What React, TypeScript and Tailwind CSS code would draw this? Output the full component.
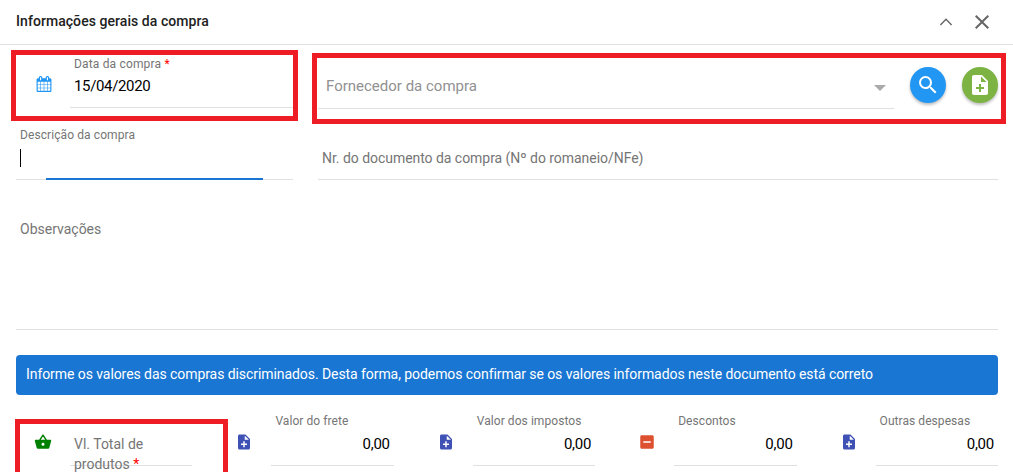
import type { ReactNode } from "react";
import {
  MdClose,
  MdIndeterminateCheckBox,
  MdNoteAdd,
  MdSearch,
  MdShoppingBasket,
} from "react-icons/md";

function CalendarIcon() {
  return (
    <svg viewBox="0 0 1792 1792" className="size-4 fill-[#2196f3]">
      <path d="M192 1664h288v-288h-288v288zM544 1664h320v-288h-320v288zM192 1312h288v-320h-288v320zM544 1312h320v-320h-320v320zM192 928h288v-288h-288v288zM928 1664h320v-288h-320v288zM544 928h320v-288h-320v288zM1312 1664h288v-288h-288v288zM928 1312h320v-320h-320v320zM576 448v-288q0-13-9.5-22.5t-22.5-9.5h-64q-13 0-22.5 9.5t-9.5 22.5v288q0 13 9.5 22.5t22.5 9.5h64q13 0 22.5-9.5t9.5-22.5zM1312 1312h288v-320h-288v320zM928 928h320v-288h-320v288zM1312 928h288v-288h-288v288zM1344 448v-288q0-13-9.5-22.5t-22.5-9.5h-64q-13 0-22.5 9.5t-9.5 22.5v288q0 13 9.5 22.5t22.5 9.5h64q13 0 22.5-9.5t9.5-22.5zM1728 384v1280q0 52-38 90t-90 38h-1408q-52 0-90-38t-38-90v-1280q0-52 38-90t90-38h128v-96q0-66 47-113t113-47h64q66 0 113 47t47 113v96h384v-96q0-66 47-113t113-47h64q66 0 113 47t47 113v96h128q52 0 90 38t38 90z" />
    </svg>
  );
}

function AmountField({ icon, label, value }: { icon: ReactNode; label: string; value: string }) {
  return (
    <div className="flex">
      <div className="w-[54px] shrink-0 pt-[38px] pl-[18px]">{icon}</div>
      <div className="flex h-[71px] min-w-0 flex-1 flex-col border-b border-[#e0e0e0] px-1 pt-[18px]">
        <span className="text-[12px] leading-4 tracking-[0.06px] whitespace-nowrap text-[#757575]">{label}</span>
        <span className="pt-[5px] text-right text-[15px] leading-5 tracking-[-0.25px] text-black">{value}</span>
      </div>
    </div>
  );
}

export default function App() {
  return (
    <div className="relative h-[472px] w-[1013px] overflow-hidden bg-white font-[Roboto,sans-serif] text-[14px] text-[#757575]">
      <header className="flex h-[45px] items-start justify-between border-b border-[#e0e0e0] pt-[10px] pr-[19px] pl-4">
        <h1 className="text-[14px] leading-[22px] font-medium tracking-[0.06px] text-[#212121]">
          Informações gerais da compra
        </h1>
        <div className="flex gap-3">
          <svg viewBox="0 0 24 24" className="size-6 fill-none stroke-[#666]" strokeWidth="1.4">
            <path d="M6.4 15 12 9.2 17.6 15" />
          </svg>
          <MdClose className="size-6 text-[#666]" />
        </div>
      </header>

      <main className="pr-[15px] pl-4">
        <div className="flex h-16 gap-[25px]">
          <div className="flex w-[277px]">
            <div className="w-[54px] pt-[31px] pl-5">
              <CalendarIcon />
            </div>
            <div className="flex h-[63px] flex-1 flex-col border-b border-[#e0e0e0] pt-[11px] pl-1">
              <span className="text-[12px] leading-4 tracking-[0.17px]">
                Data da compra <span className="text-[#f00]">*</span>
              </span>
              <span className="pt-1 text-[15px] leading-5 tracking-[-0.35px] text-black">15/04/2020</span>
            </div>
          </div>
          <div className="flex flex-1 gap-4">
            <div className="flex flex-1 items-start justify-between border-b border-[#e0e0e0] pt-[31px] pr-2 pl-2">
              <span className="text-[15px] leading-5 text-[#919191]">Fornecedor da compra</span>
              <svg viewBox="0 0 12 6" className="mt-[9px] h-[6px] w-3 fill-[#aaa]">
                <path d="M0 0h12L6 6z" />
              </svg>
            </div>
            <button className="mt-[22px] flex size-9 items-center justify-center rounded-full bg-[#2196f3] text-white shadow-[0_2px_3px_rgba(0,0,0,0.26)]">
              <MdSearch className="size-6" />
            </button>
            <button className="mt-[22px] flex size-9 items-center justify-center rounded-full bg-[#7cb342] text-white shadow-[0_2px_3px_rgba(0,0,0,0.26)]">
              <MdNoteAdd className="size-6" />
            </button>
          </div>
        </div>

        <div className="flex h-[71px] gap-[25px]">
          <div className="flex w-[277px] flex-col">
            <span className="pt-[18px] pl-1 text-[12px] leading-4 tracking-[0.09px]">Descrição da compra</span>
            <span className="mt-[6px] ml-1 h-[18px] w-px bg-black" />
            <div className="mt-[11px] flex h-[2px] items-end">
              <span className="h-px w-[30px] bg-[#e0e0e0]" />
              <span className="h-[2px] w-[217px] bg-[#1976d2]" />
              <span className="h-px w-[30px] bg-[#e0e0e0]" />
            </div>
          </div>
          <div className="flex-1 border-b border-[#e0e0e0] pt-[39px] pl-1 text-[14px] leading-5 tracking-[-0.04px]">
            Nr. do documento da compra (Nº do romaneio/NFe)
          </div>
        </div>

        <div className="h-[150px] border-b border-[#e0e0e0] pt-[39px] pl-1 text-[14px] leading-5">Observações</div>

        <div className="mt-[25px] h-10 rounded-[4px] bg-[#1976d2] pt-[9px] pl-[10px] text-[14px] leading-5 tracking-[-0.07px] text-white">
          Informe os valores das compras discriminados. Desta forma, podemos confirmar se os valores informados neste
          documento está correto
        </div>

        <div className="grid h-[77px] grid-cols-5 gap-[25px]">
          <div className="flex">
            <div className="w-[54px] shrink-0 pt-[38px] pl-[18px]">
              <MdShoppingBasket className="size-[18px] text-[#008000]" />
            </div>
            <div className="h-[71px] flex-1 border-b border-[#e0e0e0] pt-[39px] pl-1">
              <span className="block h-8 w-[90px] text-[14px] leading-5">
                Vl. Total de produtos <span className="text-[#f00]">*</span>
              </span>
            </div>
          </div>
          <AmountField icon={<MdNoteAdd className="size-[18px] text-[#3f51b5]" />} label="Valor do frete" value="0,00" />
          <AmountField icon={<MdNoteAdd className="size-[18px] text-[#3f51b5]" />} label="Valor dos impostos" value="0,00" />
          <AmountField
            icon={<MdIndeterminateCheckBox className="size-[18px] text-[#dd5030]" />}
            label="Descontos"
            value="0,00"
          />
          <AmountField icon={<MdNoteAdd className="size-[18px] text-[#3f51b5]" />} label="Outras despesas" value="0,00" />
        </div>
      </main>

      <div className="pointer-events-none absolute top-[50px] left-[11px] h-[71px] w-[287px] border-[5px] border-[#ee1c25]" />
      <div className="pointer-events-none absolute top-[53px] left-[312px] h-[71px] w-[694px] border-[5px] border-[#ee1c25]" />
      <div className="pointer-events-none absolute top-[419px] left-[15px] h-[71px] w-[213px] border-[5px] border-[#ee1c25]" />
    </div>
  );
}
